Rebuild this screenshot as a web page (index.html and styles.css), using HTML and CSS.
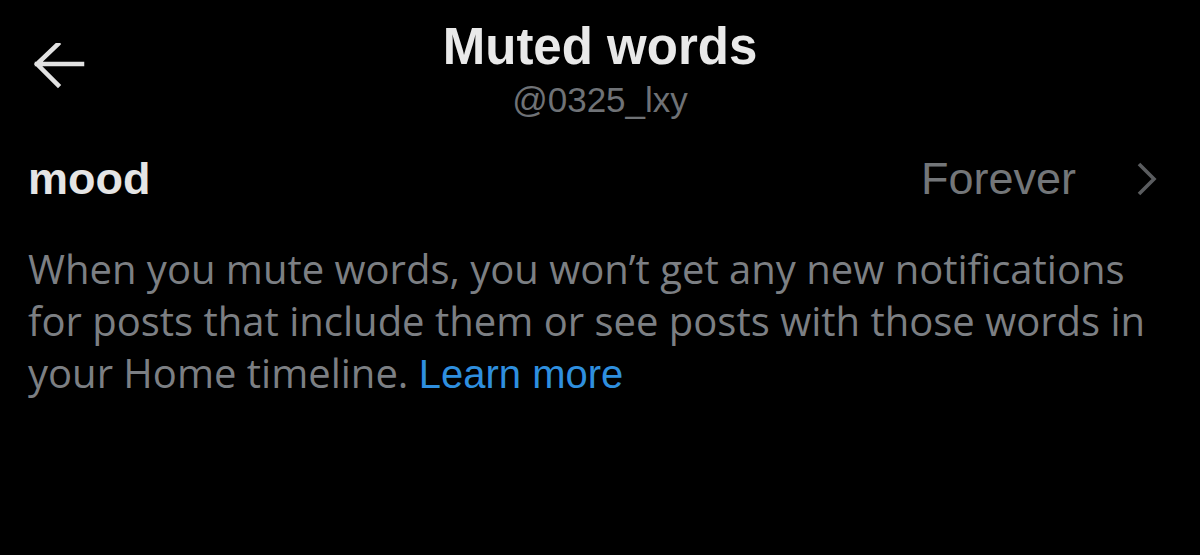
FILE: index.html
```html
<!DOCTYPE html>
<html lang="en">
<head>
    <meta charset="UTF-8">
    <meta name="viewport" content="width=device-width, initial-scale=1.0">
    <title>Muted words</title>

    <link rel="stylesheet" href="styles.css">

</head>
<body>
    <div class="topo">
        <div class="voltar">
            <svg width="56" height="50" viewBox="0 0 56 50">
                <path d="M3 21 H48 M24 1 L3 21 L24 42" fill="none" stroke="#e2e2e2" stroke-width="4.5" stroke-linecap="square"/>
            </svg>
        </div>
        <div class="titulo">
            <h1>Muted words</h1>
            <p class="usuario">@0325_lxy</p>
        </div>
        <div></div>
    </div>

    <div class="linha">
        <span class="palavra">mood</span>
        <span class="duracao">Forever</span>
        <svg class="seta" width="22" height="34" viewBox="0 0 22 34">
            <path d="M3 2 L18 17 L3 32" fill="none" stroke="#5a5c5f" stroke-width="3.6"/>
        </svg>
    </div>

    <p class="descricao">
        When you mute words, you won’t get any new notifications for posts that include them or see posts with those words in your Home timeline. <a href="#">Learn more</a>
    </p>
</body>
</html>
```

FILE: styles.css
```css
*{
    margin: 0;
    padding: 0;
    font-family: "Liberation Sans", Arial, sans-serif;
    text-decoration: none;
}

body{
    background-color: #000;
    color: #e7e7e7;
    padding: 0 28px;
}

.topo{
    display: grid;
    grid-template-columns: 120px 1fr 120px;
    padding-top: 18px;
}

.voltar{
    padding-top: 25px;
    padding-left: 6px;
}

.titulo{
    text-align: center;
}

h1{
    font-size: 51px;
    font-weight: bold;
    line-height: 58px;
    color: #e9e9e9;
}

.usuario{
    font-size: 35px;
    line-height: 44px;
    margin-top: 2px;
    color: #6f7276;
}

.linha{
    display: flex;
    align-items: center;
    margin-top: 31px;
}

.palavra{
    font-size: 45px;
    font-weight: bold;
    flex: 1;
    color: #e5e5e5;
}

.duracao{
    font-size: 45px;
    color: #737679;
    margin-right: 60px;
}

.seta{
    margin-right: 14px;
}

.descricao{
    margin-top: 38px;
    width: 1150px;
    font-family: "Open Sans", "Liberation Sans", sans-serif;
    font-size: 40px;
    line-height: 52px;
    color: #7c7f83;
}

.descricao a{
    color: #2f8fdf;
}
```
